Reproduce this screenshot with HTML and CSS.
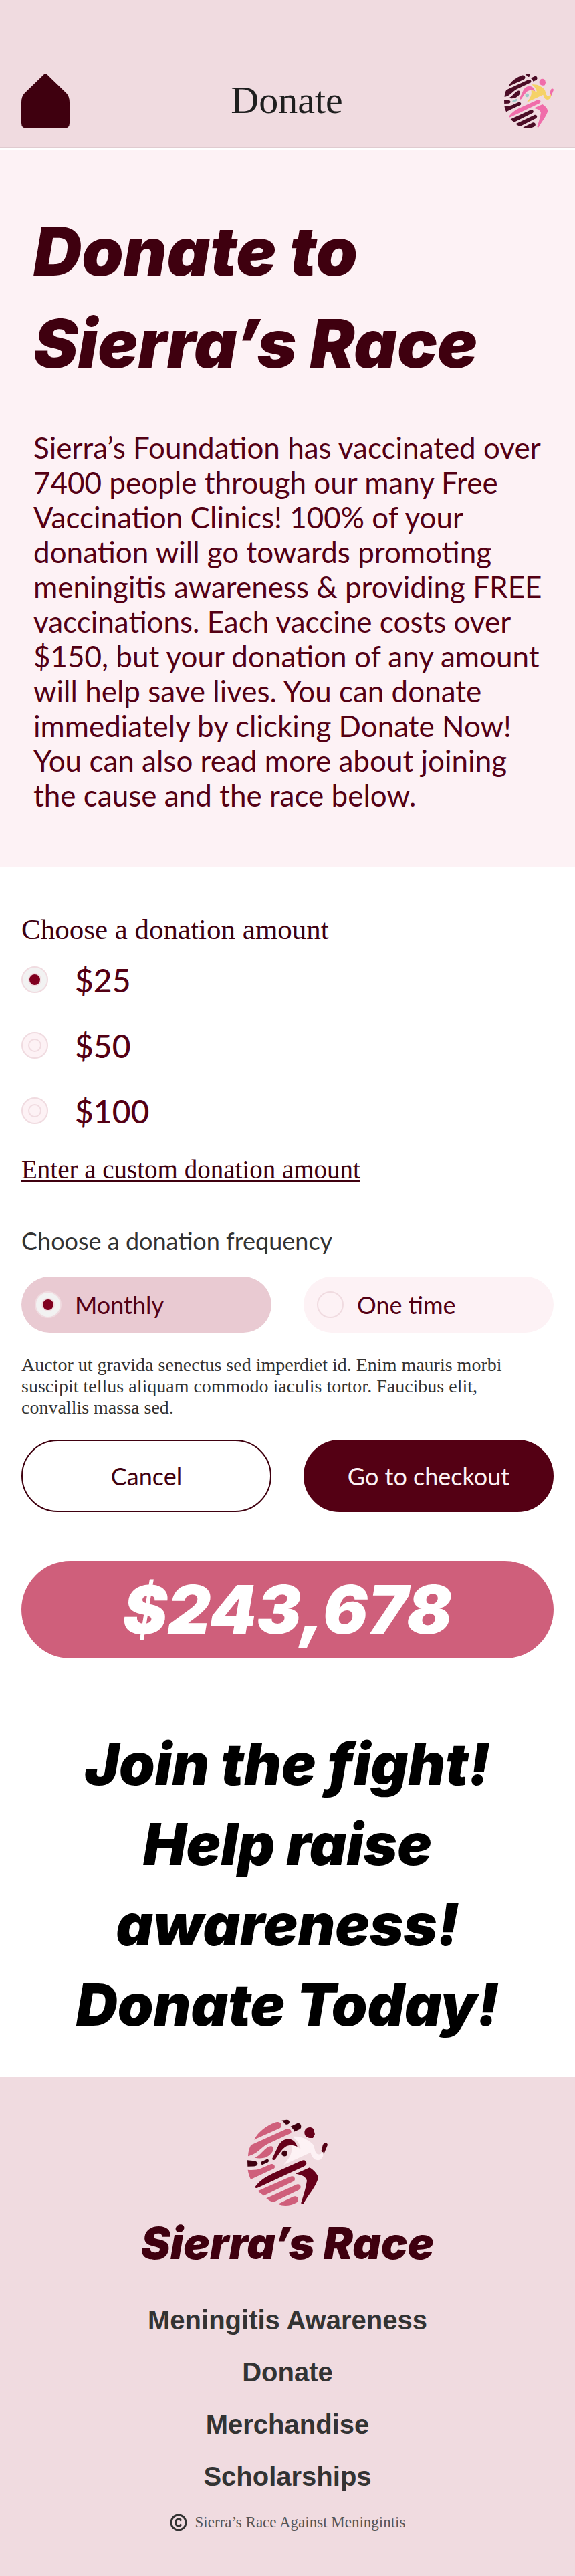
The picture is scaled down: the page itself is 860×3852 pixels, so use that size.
FILE: index.html
```html
<!DOCTYPE html>
<html lang="en">
<head>
<meta charset="utf-8">
<meta name="viewport" content="width=device-width, initial-scale=1">
<title>Donate</title>
<link rel="stylesheet" href="styles.css">
</head>
<body>
<svg class="sprite" aria-hidden="true">
  <symbol id="runner" viewBox="90 87 360 386" preserveAspectRatio="none">
    <g class="runner-stripe">
      <path d="M120 178C140 142 174 116 214 101C230 95 243 103 243 114C243 122 238 126 231 129Z"/>
      <path d="M93 252C94 232 98 216 106 202L262 132C276 126 287 134 287 143C287 148 284 150 279 152L182 197C152 212 134 244 93 252Z"/>
      <path d="M122 259C150 250 160 222 188 209C200 204 208 211 207 220C205 236 184 256 164 260C148 263 134 262 122 259Z"/>
      <path d="M92 314C114 316 134 314 150 308L193 289C204 285 213 291 213 300C213 305 210 308 205 310L105 356C98 342 94 328 92 314Z"/>
      <path d="M137 408L282 344C294 339 303 346 303 354C303 361 299 364 294 366L164 429C154 423 145 416 137 408Z"/>
      <path d="M175 441L308 380C320 375 329 381 329 390C329 397 325 401 319 404L206 459C194 454 184 449 175 441Z"/>
      <path d="M228 466L294 434C308 428 318 436 318 446C318 454 314 458 308 461C284 474 252 477 228 466Z"/>
    </g>
    <g class="runner-dark">
      <path d="M244 92L266 89C275 88 279 94 279 99C279 106 273 110 266 110C259 110 257 101 244 92Z"/>
      <path d="M284 119L312 106C323 101 331 109 331 119C331 127 327 130 322 133L301 142C299 134 292 128 284 119Z"/>
      <path d="M90 270L120 273C130 274 136 279 136 286C136 293 130 297 120 298L91 299Z"/>
      <path d="M428 204C432 193 438 192 443 193C450 195 451 201 448 207L432 245C430 237 424 232 422 228Z" class="runner-hand"/>
    </g>
    <path class="runner-accent" d="M155 276L175 267C182 264 186 268 186 273C186 277 183 279 180 281L160 290C154 292 150 288 150 283C150 279 152 278 155 276Z"/>
    <circle class="runner-accent" cx="257" cy="240" r="13"/>
    <g class="runner-body">
      <path d="M346 147C346 132 357 123 369 123C382 123 390 131 390 143L393 154L389 157C388 168 386 172 376 171C357 171 346 162 346 147Z"/>
      <path d="M202 262L225 214C238 184 256 175 274 175C296 176 310 192 314 210C296 202 276 199 260 211C244 222 228 248 216 265C209 274 199 268 202 262Z"/>
      <path d="M126 388C144 362 172 345 203 330L334 272C347 266 355 275 355 284C355 291 351 295 344 298L138 393C128 398 122 393 126 388Z"/>
      <path d="M306 331L369 303C386 313 402 328 408 348C400 386 364 424 342 464C338 470 330 466 331 460C342 426 352 396 357 362C352 342 330 336 306 331Z"/>
    </g>
    <path class="runner-shirt" d="M291 165C330 159 360 178 380 195C396 209 388 243 410 244C420 245 425 236 430 232C435 252 422 270 406 270C388 270 377 253 374 236L252 291C280 262 294 236 287 205C302 205 313 208 328 220C326 194 308 176 291 165Z"/>
  </symbol>
</svg>

<header class="topbar">
  <a class="home" href="#" aria-label="Home">
    <svg viewBox="0 0 72 82"><path d="M34 1Q36 -1 38 1L67 29Q72 34 72 43V74Q72 82 64 82H8Q0 82 0 74V43Q0 34 5 29Z"/></svg>
  </a>
  <p class="topbar-title">Donate</p>
  <a class="brand" href="#" aria-label="Sierra’s Race"><svg class="runner runner-bright"><use href="#runner"/></svg></a>
</header>

<main>
  <section class="hero">
    <h1>Donate to<br>Sierra’s Race</h1>
    <p>Sierra’s Foundation has vaccinated over 7400 people through our many Free Vaccination Clinics! 100% of your donation will go towards promoting meningitis awareness &amp; providing FREE vaccinations. Each vaccine costs over $150, but your donation of any amount will help save lives. You can donate immediately by clicking Donate Now! You can also read more about joining the cause and the race below.</p>
  </section>

  <form class="donation">
    <fieldset>
      <legend class="amount-title">Choose a donation amount</legend>
      <label class="amount"><input class="radio" type="radio" name="amount" value="25" checked>$25</label>
      <label class="amount"><input class="radio" type="radio" name="amount" value="50">$50</label>
      <label class="amount"><input class="radio" type="radio" name="amount" value="100">$100</label>
    </fieldset>
    <a class="custom" href="#">Enter a custom donation amount</a>
    <fieldset>
      <legend class="frequency-title">Choose a donation frequency</legend>
      <div class="pair">
        <label class="frequency"><input class="radio" type="radio" name="frequency" value="monthly" checked>Monthly</label>
        <label class="frequency"><input class="radio" type="radio" name="frequency" value="once">One time</label>
      </div>
    </fieldset>
    <p class="note">Auctor ut gravida senectus sed imperdiet id. Enim mauris morbi suscipit tellus aliquam commodo iaculis tortor. Faucibus elit, convallis massa sed.</p>
    <div class="pair">
      <button class="button" type="button">Cancel</button>
      <button class="button button-primary" type="submit">Go to checkout</button>
    </div>
  </form>

  <section class="appeal">
    <p class="total">$243,678</p>
    <h2>Join the fight!<br>Help raise<br>awareness!<br>Donate Today!</h2>
  </section>
</main>

<footer class="footer">
  <svg class="runner" aria-hidden="true"><use href="#runner"/></svg>
  <p class="footer-name">Sierra’s Race</p>
  <nav class="footer-nav">
    <a href="#">Meningitis Awareness</a>
    <a href="#">Donate</a>
    <a href="#">Merchandise</a>
    <a href="#">Scholarships</a>
  </nav>
  <p class="copyright">
    <svg viewBox="0 0 26 26" role="img" aria-label="Copyright"><circle cx="13" cy="13" r="11"/><path d="M17 10.500Q15.500 8 13 8Q9 8 9 13Q9 18 13 18Q15.500 18 17 15.500"/></svg>
    Sierra’s Race Against Meningintis
  </p>
</footer>
</body>
</html>
```
FILE: styles.css
```css
:root {
  --blush: #f0dbe0;
  --petal: #fdf2f5;
  --wine: #3f000f;
  --claret: #540014;
  --crimson: #80001f;
  --rose: #cf5f7b;
  --ink: #333333;
  --sans: Lato, "Open Sans", sans-serif;
  --display: Inter, "Open Sans", sans-serif;
  --serif: "Liberation Serif", serif;
}

* { box-sizing: border-box; }

body {
  margin: 0;
  background: #ffffff;
  color: var(--claret);
  font-family: var(--sans);
}

h1, h2, p { margin: 0; }

fieldset {
  margin: 0;
  padding: 0;
  border: 0;
  min-width: 0;
}

legend { padding: 0; }

.sprite {
  display: block;
  width: 0;
  height: 0;
}

.topbar {
  display: flex;
  justify-content: space-between;
  align-items: flex-start;
  padding: 110px 32px 28px;
  background: var(--blush);
  border-bottom: 2px solid #e0cbd0;
}

.home, .home svg, .brand { display: block; }

.home svg {
  width: 72px;
  height: 82px;
  fill: var(--wine);
}

.topbar-title {
  color: #1f1f1f;
  font-family: var(--serif);
  font-size: 58px;
  line-height: 80px;
}

.runner {
  display: block;
  width: 120px;
  height: 129px;
}

.runner-stripe { fill: var(--stripe, #cf5f7b); }
.runner-dark { fill: var(--dark, #3f000f); }
.runner-accent { fill: var(--accent, #3f000f); }
.runner-body { fill: var(--body, #66001a); }
.runner-hand { fill: var(--hand, #540014); }
.runner-shirt { fill: var(--shirt, #fdf2f5); }

.runner-bright {
  --stripe: #4b0c26;
  --dark: #4b0c26;
  --accent: #9ccaca;
  --body: #f06daa;
  --hand: #f06daa;
  --shirt: #f5d268;
  width: 74px;
  height: 82px;
}

.hero {
  padding: 83px 40px 81px 50px;
  border-top: 2px solid #ffffff;
  background: var(--petal);
}

h1, h2, .total, .footer-name {
  font-family: var(--display);
  font-weight: 900;
  font-style: italic;
}

.hero h1 {
  margin-bottom: 60px;
  color: var(--wine);
  font-size: 100px;
  line-height: 138px;
}

.hero p {
  font-size: 44px;
  line-height: 52px;
}

.donation { padding: 68px 32px 0; }

.amount-title {
  color: var(--wine);
  font-family: var(--serif);
  font-size: 43px;
  line-height: 52px;
}

.amount {
  display: flex;
  align-items: center;
  gap: 40px;
  height: 98px;
  font-size: 48px;
  font-weight: 500;
}

.radio {
  appearance: none;
  display: grid;
  place-items: center;
  flex: none;
  width: 40px;
  height: 40px;
  margin: 0;
  border: 2px solid var(--blush);
  border-radius: 50%;
  background: var(--petal);
}

.radio::before {
  content: "";
  box-sizing: border-box;
  width: 20px;
  height: 20px;
  border: 2px solid var(--blush);
  border-radius: 50%;
}

.radio:checked { background: #f2f2f2; }
.radio:checked::before { background: var(--crimson); }
.frequency .radio:not(:checked)::before { display: none; }

.custom {
  display: block;
  width: fit-content;
  margin: 13px 0 58px;
  color: var(--wine);
  font-family: var(--serif);
  font-size: 39px;
  line-height: 52px;
  text-decoration: underline;
  text-decoration-thickness: 2px;
  text-underline-offset: 3px;
}

.frequency-title {
  margin-bottom: 32px;
  color: var(--ink);
  font-size: 36px;
  line-height: 44px;
}

.pair {
  display: grid;
  grid-template-columns: 1fr 1fr;
  gap: 48px;
}

.frequency {
  display: flex;
  align-items: center;
  gap: 20px;
  height: 84px;
  padding: 0 20px;
  border-radius: 42px;
  background: var(--petal);
  font-size: 36px;
}

.frequency:has(:checked) { background: #e9cad2; }

.note {
  max-width: 780px;
  margin: 32px 0;
  color: var(--ink);
  font-family: var(--serif);
  font-size: 28px;
  line-height: 32px;
}

.button {
  height: 108px;
  border: 2px solid var(--wine);
  border-radius: 54px;
  background: #ffffff;
  color: var(--wine);
  font-family: var(--sans);
  font-size: 36px;
}

.button-primary {
  border-color: var(--claret);
  background: var(--claret);
  color: var(--petal);
}

.appeal {
  padding: 73px 32px 48px;
  text-align: center;
}

.total {
  border-radius: 73px;
  background: var(--rose);
  color: #ffffff;
  font-size: 100px;
  line-height: 146px;
}

.appeal h2 {
  margin-top: 98px;
  color: #000000;
  font-size: 86px;
  line-height: 120px;
}

.footer {
  display: flex;
  flex-direction: column;
  align-items: center;
  padding: 63px 32px 64px;
  background: var(--blush);
}

.footer-name {
  margin: 18px 0 38px;
  color: var(--wine);
  font-size: 66px;
  line-height: 76px;
}

.footer-nav {
  display: flex;
  flex-direction: column;
  align-items: center;
}

.footer-nav a {
  color: var(--ink);
  font-family: "Liberation Sans", sans-serif;
  font-size: 40px;
  font-weight: 700;
  line-height: 78px;
  text-decoration: none;
}

.copyright {
  display: flex;
  align-items: center;
  gap: 12px;
  margin-top: 14px;
  color: #555555;
  font-family: var(--serif);
  font-size: 23px;
  line-height: 32px;
}

.copyright svg {
  width: 26px;
  height: 26px;
  fill: none;
  stroke: var(--ink);
  stroke-width: 3;
}
```
